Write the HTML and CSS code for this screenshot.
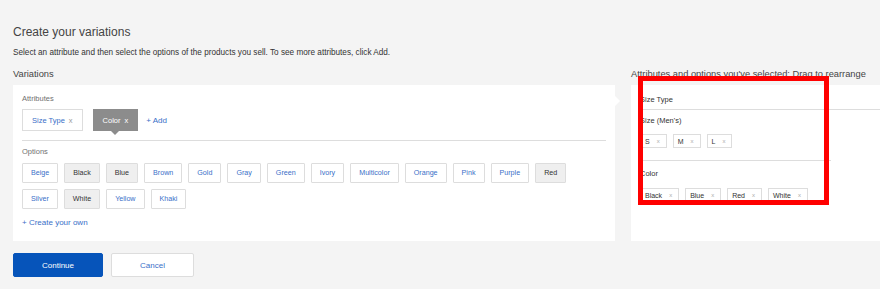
FILE: index.html
```html
<!DOCTYPE html>
<html lang="en">

<head>
    <meta charset="UTF-8">
    <meta name="viewport" content="width=device-width, initial-scale=1.0">
    <title>Create your variations</title>
    <link rel="stylesheet" href="styles.css">
</head>

<body>
    <div class="page">
        <h1 class="page-title">Create your variations</h1>
        <p class="page-intro">Select an attribute and then select the options of the products you sell. To see more attributes, click Add.</p>

        <div class="columns">
            <section class="column column--main">
                <h2 class="column-title">Variations</h2>
                <div class="panel panel--variations">
                    <div class="field-label">Attributes</div>
                    <div class="attributes">
                        <span class="attr">Size Type <span class="attr__x">x</span></span>
                        <span class="attr attr--active">Color <span class="attr__x">x</span></span>
                        <a class="link" href="#">+ Add</a>
                    </div>

                    <div class="field-label">Options</div>
                    <ul class="options">
                        <li class="option">Beige</li>
                        <li class="option option--on">Black</li>
                        <li class="option option--on">Blue</li>
                        <li class="option">Brown</li>
                        <li class="option">Gold</li>
                        <li class="option">Gray</li>
                        <li class="option">Green</li>
                        <li class="option">Ivory</li>
                        <li class="option">Multicolor</li>
                        <li class="option">Orange</li>
                        <li class="option">Pink</li>
                        <li class="option">Purple</li>
                        <li class="option option--on">Red</li>
                        <li class="option">Silver</li>
                        <li class="option option--on">White</li>
                        <li class="option">Yellow</li>
                        <li class="option">Khaki</li>
                    </ul>
                    <a class="link link--create" href="#">+ Create your own</a>
                </div>
            </section>

            <section class="column column--side">
                <h2 class="column-title">Attributes and options you've selected: Drag to rearrange</h2>
                <div class="panel panel--selected">
                    <div class="selected-group selected-group--head">Size Type</div>
                    <div class="selected-group">
                        <div class="selected-name">Size (Men's)</div>
                        <div class="chips">
                            <span class="chip">S <span class="chip__x">x</span></span>
                            <span class="chip">M <span class="chip__x">x</span></span>
                            <span class="chip">L <span class="chip__x">x</span></span>
                        </div>
                    </div>
                    <div class="selected-group selected-group--last">
                        <div class="selected-name">Color</div>
                        <div class="chips">
                            <span class="chip">Black <span class="chip__x">x</span></span>
                            <span class="chip">Blue <span class="chip__x">x</span></span>
                            <span class="chip">Red <span class="chip__x">x</span></span>
                            <span class="chip">White <span class="chip__x">x</span></span>
                        </div>
                    </div>
                </div>
            </section>
        </div>

        <div class="actions">
            <button class="btn btn--primary">Continue</button>
            <button class="btn">Cancel</button>
        </div>
    </div>

    <div class="highlight"></div>
</body>

</html>
```

FILE: styles.css
```css
:root {
    --background: #f4f4f4;
    --panel: #ffffff;
    --text: #333333;
    --muted: #707070;
    --border: #dddddd;
    --link: #3a6fc8;
    --selected: #efefef;
    --primary: #0654ba;
}

body {
    font-family: 'Liberation Sans', Arial, sans-serif;
    margin: 0px;
    background-color: var(--background);
    color: var(--text);
    overflow: hidden;
}

.page {
    padding: 25px 0px 0px 13px;
    width: 890px;
}

.page-title {
    font-size: 12px;
    font-weight: normal;
    line-height: 14px;
    margin: 0px;
    color: #444;
}

.page-intro {
    font-size: 8.2px;
    line-height: 10px;
    margin: 9px 0px 0px;
}

.columns {
    display: flex;
    gap: 16px;
    margin-top: 10px;
}

.column--main {
    width: 602px;
}

.column--side {
    flex: 1;
}

.column-title {
    font-size: 9.3px;
    font-weight: normal;
    line-height: 12px;
    margin: 0px 0px 5px;
    color: #444;
}

.panel {
    background-color: var(--panel);
    height: 156px;
    box-sizing: border-box;
}

.panel--variations {
    position: relative;
    padding: 8px 9px;
}

.panel--variations::after {
    content: '';
    position: absolute;
    right: -5px;
    top: 11px;
    border-left: 5px solid var(--panel);
    border-top: 5px solid transparent;
    border-bottom: 5px solid transparent;
}

.field-label {
    font-size: 7.5px;
    line-height: 12px;
    color: var(--muted);
}

.attributes {
    display: flex;
    align-items: center;
    gap: 10px;
    margin-top: 4px;
    padding-bottom: 9px;
    border-bottom: 1px solid var(--border);
    margin-bottom: 5px;
}

.attr {
    position: relative;
    display: inline-flex;
    align-items: center;
    gap: 4px;
    height: 22px;
    padding: 0px 9px;
    box-sizing: border-box;
    border: 1px solid var(--border);
    font-size: 7.5px;
    color: var(--link);
}

.attr__x {
    color: #999;
}

.attr--active {
    background-color: #8c8c8c;
    border-color: #8c8c8c;
    color: #ffffff;
    margin-right: -2px;
}

.attr--active .attr__x {
    color: #ffffff;
}

.attr--active::after {
    content: '';
    position: absolute;
    left: 50%;
    bottom: -5px;
    margin-left: -4px;
    border-top: 4px solid #8c8c8c;
    border-left: 4px solid transparent;
    border-right: 4px solid transparent;
}

.link {
    font-size: 8px;
    color: var(--link);
    text-decoration: none;
}

.options {
    list-style-type: none;
    display: flex;
    flex-wrap: wrap;
    gap: 6px;
    padding: 0px;
    margin: 5px 0px 0px;
}

.option {
    height: 20px;
    line-height: 18px;
    padding: 0px 8px;
    box-sizing: border-box;
    border: 1px solid var(--border);
    border-radius: 1px;
    font-size: 7.15px;
    color: var(--link);
}

.option--on {
    background-color: var(--selected);
    color: var(--text);
}

.link--create {
    display: block;
    margin-top: 9px;
    line-height: 10px;
}

.panel--selected {
    padding: 0px 0px 0px 9px;
    width: 260px;
}

.selected-group {
    border-top: 1px solid var(--border);
    padding: 5px 0px 12px;
}

.selected-group--head {
    border-top: none;
    font-size: 7.5px;
    line-height: 12px;
    padding: 9px 0px 3px;
}

.selected-group--last {
    margin-right: 60px;
    padding-top: 7px;
}

.selected-name {
    font-size: 7.5px;
    line-height: 12px;
}

.chips {
    display: flex;
    gap: 6px;
    margin-top: 7px;
}

.selected-group--last .chips {
    margin-top: 8px;
}

.chip {
    display: inline-flex;
    align-items: center;
    gap: 7px;
    height: 14px;
    padding: 0px 6px 0px 4px;
    box-sizing: border-box;
    border: 1px solid var(--border);
    font-size: 7px;
}

.chip__x {
    font-size: 6px;
    color: #aaa;
}

.actions {
    display: flex;
    gap: 8px;
    margin-top: 12px;
}

.btn {
    font-family: inherit;
    font-size: 8px;
    height: 24px;
    width: 83px;
    border: 1px solid var(--border);
    border-radius: 2px;
    background-color: #ffffff;
    color: var(--link);
}

.btn--primary {
    width: 90px;
    background-color: var(--primary);
    border-color: var(--primary);
    color: #ffffff;
}

.highlight {
    position: absolute;
    left: 638px;
    top: 76px;
    width: 181px;
    height: 119px;
    border: 5px solid #ff0000;
}
```
